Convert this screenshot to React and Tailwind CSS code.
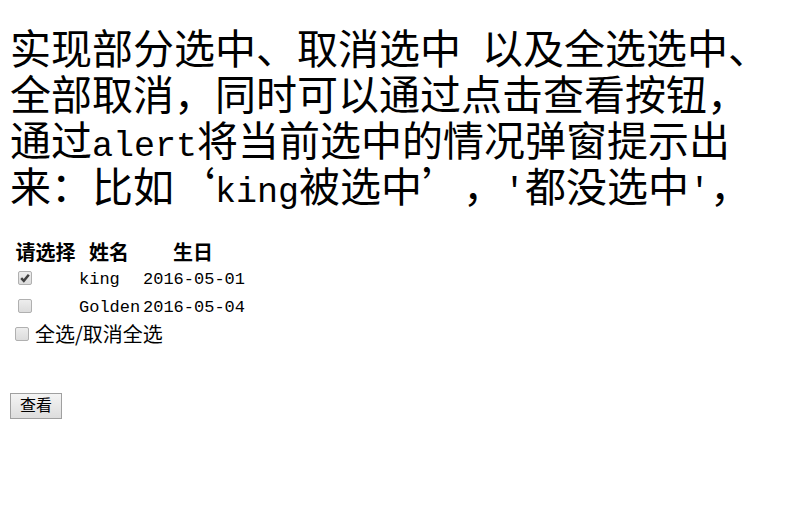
import { useState } from "react";

const people = [
  { id: "king", name: "king", birthday: "2016-05-01" },
  { id: "golden", name: "Golden", birthday: "2016-05-04" },
];

function Latin({ children }) {
  return <span className="whitespace-pre font-['Liberation_Mono',monospace] text-[35px] leading-5">{children}</span>;
}

function Checkbox({ id, checked, onChange, label }) {
  return (
    <span className="relative block size-[14px] shrink-0">
      <input
        id={id}
        type="checkbox"
        aria-label={label}
        checked={checked}
        onChange={onChange}
        className="block size-[14px] appearance-none rounded-xs border border-[#b0b0b0] bg-linear-to-b from-[#ededed] to-[#dcdcdc]"
      />
      {checked && (
        <svg viewBox="0 0 14 14" className="pointer-events-none absolute inset-0 size-[14px]" aria-hidden="true">
          <path d="M3.2 7.2 5.8 9.8 10.8 3.8" fill="none" stroke="#404040" strokeWidth="2.5" />
        </svg>
      )}
    </span>
  );
}

export default function App() {
  const [selected, setSelected] = useState(["king"]);
  const all = selected.length === people.length;

  const toggle = (id) =>
    setSelected(selected.includes(id) ? selected.filter((s) => s !== id) : [...selected, id]);

  const show = () => alert(selected.length ? selected.map((s) => `${s}被选中`).join("，") : "都没选中");

  return (
    <main className="min-h-screen bg-white px-[10px] pt-[23px] font-['Noto_Sans_CJK_SC',sans-serif] text-black">
      <h1 className="pr-5 text-[41px] leading-[46px] font-normal [text-spacing-trim:space-all]">
        实现部分选中、取消选中<Latin> </Latin>以及全选选中、全部取消，同时可以通过点击查看按钮，通过<Latin>alert</Latin>
        将当前选中的情况弹窗提示出来：比如‘<Latin>king</Latin>被选中’，<Latin>'</Latin>都没选中<Latin>'</Latin>，
      </h1>

      <table className="mt-[31px] border-collapse text-[20px] leading-7 whitespace-nowrap">
        <colgroup>
          <col className="w-[67px]" />
          <col className="w-[64px]" />
          <col className="w-[104px]" />
        </colgroup>
        <thead>
          <tr>
            <th className="p-0 pl-1 font-bold">请选择</th>
            <th className="p-0 font-bold">姓名</th>
            <th className="p-0 font-bold">生日</th>
          </tr>
        </thead>
        <tbody className="font-['Liberation_Mono',monospace] text-[17px]">
          {people.map((p) => (
            <tr key={p.id} className="h-7">
              <td className="p-0 pb-1 pl-2 align-middle">
                <Checkbox id={p.id} label={p.name} checked={selected.includes(p.id)} onChange={() => toggle(p.id)} />
              </td>
              <td className="p-0 pl-[2px]">{p.name}</td>
              <td className="p-0 pl-[2px]">{p.birthday}</td>
            </tr>
          ))}
        </tbody>
      </table>

      <div className="flex h-6 items-center gap-[6px] pl-[5px]">
        <Checkbox id="all" checked={all} onChange={() => setSelected(all ? [] : people.map((p) => p.id))} />
        <label htmlFor="all" className="text-[20px] leading-6">
          全选/取消全选
        </label>
      </div>

      <button
        type="button"
        onClick={show}
        className="mt-[47px] block h-[26px] border border-[#a0a0a0] bg-linear-to-b from-[#f4f4f4] to-[#dddddd] px-[9px] pb-1 text-base leading-5"
      >
        查看
      </button>
    </main>
  );
}
